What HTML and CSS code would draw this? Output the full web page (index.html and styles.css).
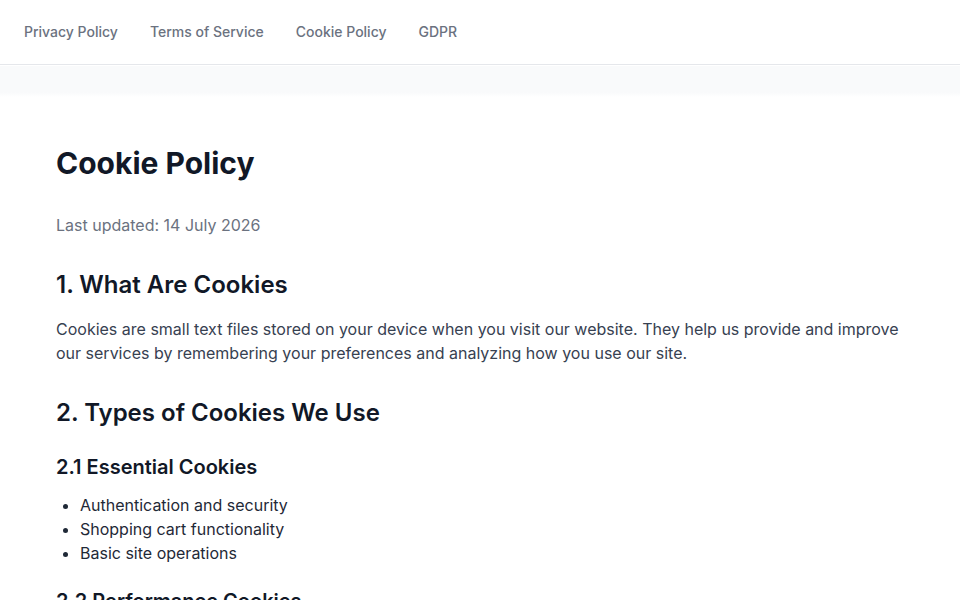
FILE: index.html
```
<!DOCTYPE html>
<html lang="en">
<head>
    <meta charset="UTF-8">
    <meta name="viewport" content="width=device-width, initial-scale=1.0">
    <title>Cookie Policy</title>
    <link rel="stylesheet" href="styles.css">
</head>
<body>
    <header class="legal-nav">
        <a href="#" class="nav-link">Privacy Policy</a>
        <a href="#" class="nav-link">Terms of Service</a>
        <a href="#" class="nav-link">Cookie Policy</a>
        <a href="#" class="nav-link">GDPR</a>
    </header>

    <div class="band"></div>

    <main class="policy">
        <h1>Cookie Policy</h1>
        <p class="updated">Last updated: 14 July 2026</p>

        <h2>1. What Are Cookies</h2>
        <p>Cookies are small text files stored on your device when you visit our website. They help us provide and improve our services by remembering your preferences and analyzing how you use our site.</p>

        <h2>2. Types of Cookies We Use</h2>
        <h3>2.1 Essential Cookies</h3>
        <ul>
            <li>Authentication and security</li>
            <li>Shopping cart functionality</li>
            <li>Basic site operations</li>
        </ul>

        <h3>2.2 Performance Cookies</h3>
        <ul>
            <li>Page load times</li>
            <li>Error tracking</li>
        </ul>
    </main>
</body>
</html>
```

FILE: styles.css
```
body {
    margin: 0;
    background-color: #fff;
    font-family: Inter, "Liberation Sans", sans-serif;
    color: #111827;
}

.legal-nav {
    display: flex;
    align-items: center;
    gap: 32px;
    height: 65px;
    padding: 0 24px 2px;
    box-sizing: border-box;
    border-bottom: 1px solid #e5e7eb;
}

.nav-link {
    font-size: 14px;
    font-weight: 500;
    color: #6b7280;
    text-decoration: none;
}

.band {
    height: 31px;
    margin-top: 1px;
    background: linear-gradient(#f9fafb 85%, #fff);
}

.policy {
    padding: 48px 56px;
}

.policy h1 {
    margin: 0 0 32px;
    font-size: 30px;
    line-height: 36px;
    font-weight: 700;
}

.policy .updated {
    margin: 0 0 32px;
    color: #6b7280;
}

.policy h2 {
    margin: 0 0 16px;
    font-size: 24px;
    line-height: 32px;
    font-weight: 600;
}

.policy h3 {
    margin: 0 0 12px;
    font-size: 20px;
    line-height: 28px;
    font-weight: 600;
}

.policy p {
    margin: 0 0 32px;
    font-size: 16px;
    line-height: 24px;
    color: #374151;
}

.policy ul {
    margin: 0 0 22px;
    padding-left: 24px;
    font-size: 16px;
    line-height: 24px;
    color: #1f2937;
}

.policy h2 + h3 {
    margin-top: 24px;
}
```
